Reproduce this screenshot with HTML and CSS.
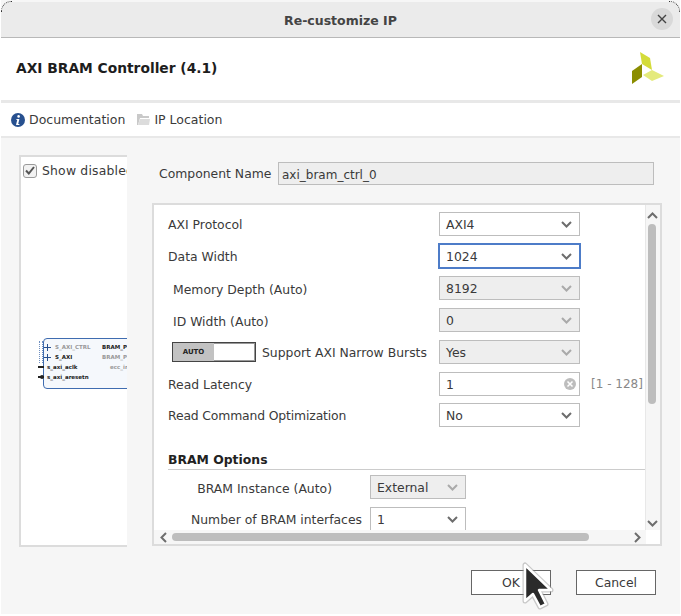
FILE: index.html
```html
<!DOCTYPE html>
<html lang="en">

<head>
    <meta charset="UTF-8">
    <title>Re-customize IP</title>
    <link rel="stylesheet" href="styles.css">
</head>

<body>
    <div id="dialog">
        <div class="titlebar">
            <span class="title">Re-customize IP</span>
            <span class="close">
                <svg width="10" height="10" viewBox="0 0 10 10"><path d="M1 1L9 9M9 1L1 9" stroke="#444" stroke-width="1.4" fill="none"/></svg>
            </span>
        </div>

        <div class="header">
            <h1>AXI BRAM Controller (4.1)</h1>
            <svg class="logo" width="33" height="33" viewBox="0 0 33 33">
                <polygon points="9,0 19,6 21,18 11,12" fill="#d4dc3a"/>
                <polygon points="1,19 11,12 11,25 1,32" fill="#8b8d00"/>
                <polygon points="12,23 21,18 33,24 21,29" fill="#e4ea7c"/>
            </svg>
        </div>

        <div class="toolbar">
            <span class="tool">
                <svg width="14" height="14" viewBox="0 0 14 14"><circle cx="7" cy="7" r="7" fill="#27508f"/><circle cx="7.6" cy="3.4" r="1.3" fill="#fff"/><path d="M5.4 6h3l-1.2 5h1.2v1H5l1.2-5H5.400z" fill="#fff"/></svg>
                Documentation
            </span>
            <span class="tool">
                <svg width="13" height="13" viewBox="0 0 13 13"><path d="M0 1h5l1 2h6v2H3L1 12H0z" fill="#c9c9c9"/><path d="M3 6h10l-1 6H1z" fill="#dcdcdc"/></svg>
                IP Location
            </span>
        </div>

        <div class="main">
            <div class="preview">
                <label class="show-disabled">
                    <span class="check">
                        <svg width="10" height="9" viewBox="0 0 10 9"><path d="M1 4.500L3.800 7.500L9 1" stroke="#555" stroke-width="2" fill="none"/></svg>
                    </span>
                    Show disabled ports
                </label>
                <div class="block">
                    <div class="dots"></div>
                    <div class="port"><i class="plus"></i><span>S_AXI_CTRL</span></div>
                    <div class="port dark"><i class="plus"></i><span>S_AXI</span></div>
                    <div class="port dark pin"><span>s_axi_aclk</span></div>
                    <div class="port dark pin reset"><span>s_axi_aresetn</span></div>
                    <div class="out dark">BRAM_PORTA</div>
                    <div class="out out2">BRAM_PORTB</div>
                    <div class="out out3">ecc_interrupt</div>
                </div>
            </div>

            <div class="form">
                <div class="name-row">
                    <span class="name-label">Component Name</span>
                    <div class="name-box">axi_bram_ctrl_0</div>
                </div>

                <div class="scroll-panel">
                    <div class="scroll-view">
                        <div class="params">
                            <div class="row">
                                <span class="label">AXI Protocol</span>
                                <div class="select"><span>AXI4</span><svg class="chev" viewBox="0 0 11 7"><path d="M1 1L5.500 5.500L10 1" /></svg></div>
                            </div>
                            <div class="row">
                                <span class="label">Data Width</span>
                                <div class="select focus"><span>1024</span><svg class="chev" viewBox="0 0 11 7"><path d="M1 1L5.500 5.500L10 1" /></svg></div>
                            </div>
                            <div class="row">
                                <span class="label sub">Memory Depth (Auto)</span>
                                <div class="select off"><span>8192</span><svg class="chev" viewBox="0 0 11 7"><path d="M1 1L5.500 5.500L10 1" /></svg></div>
                            </div>
                            <div class="row">
                                <span class="label sub">ID Width (Auto)</span>
                                <div class="select off"><span>0</span><svg class="chev" viewBox="0 0 11 7"><path d="M1 1L5.500 5.500L10 1" /></svg></div>
                            </div>
                            <div class="row">
                                <span class="label toggle-label"><span class="toggle"><i>AUTO</i></span>Support AXI Narrow Bursts</span>
                                <div class="select off"><span>Yes</span><svg class="chev" viewBox="0 0 11 7"><path d="M1 1L5.500 5.500L10 1" /></svg></div>
                            </div>
                            <div class="row latency">
                                <span class="label">Read Latency</span>
                                <div class="select input"><span>1</span>
                                    <svg class="clear" width="12" height="12" viewBox="0 0 12 12"><circle cx="6" cy="6" r="6" fill="#bdbdbd"/><path d="M3.500 3.500L8.500 8.500M8.500 3.500L3.500 8.500" stroke="#fff" stroke-width="1.500"/></svg>
                                </div>
                                <span class="range">[1 - 128]</span>
                            </div>
                            <div class="row">
                                <span class="label tight">Read Command Optimization</span>
                                <div class="select"><span>No</span><svg class="chev" viewBox="0 0 11 7"><path d="M1 1L5.500 5.500L10 1" /></svg></div>
                            </div>

                            <div class="section">BRAM Options</div>
                            <div class="row2">
                                <span class="label2 inset">BRAM Instance (Auto)</span>
                                <div class="select small off"><span>External</span><svg class="chev" viewBox="0 0 11 7"><path d="M1 1L5.500 5.500L10 1" /></svg></div>
                            </div>
                            <div class="row2">
                                <span class="label2">Number of BRAM interfaces</span>
                                <div class="select small"><span>1</span><svg class="chev" viewBox="0 0 11 7"><path d="M1 1L5.500 5.500L10 1" /></svg></div>
                            </div>
                        </div>
                        <div class="vbar">
                            <svg class="arrow" viewBox="0 0 11 7"><path d="M1 6L5.500 1.500L10 6" /></svg>
                            <div class="vtrack"><div class="vthumb"></div></div>
                            <svg class="arrow" viewBox="0 0 11 7"><path d="M1 1L5.500 5.500L10 1" /></svg>
                        </div>
                    </div>
                    <div class="hbar">
                        <svg class="arrow-h" viewBox="0 0 7 11"><path d="M6 1L1.500 5.500L6 10" /></svg>
                        <div class="htrack"><div class="hthumb"></div></div>
                        <svg class="arrow-h" viewBox="0 0 7 11"><path d="M1 1L5.500 5.500L1 10" /></svg>
                        <div class="corner"></div>
                    </div>
                </div>
            </div>
        </div>

        <div class="buttons">
            <button class="btn">OK</button>
            <button class="btn">Cancel</button>
        </div>

        <svg class="cursor" width="36" height="54" viewBox="0 0 36 54">
            <path d="M4 6L4 42L12 35L19 48L25 45L18 31L30 31Z" fill="none" stroke="#999" stroke-opacity="0.5" stroke-width="5" stroke-linejoin="round"/>
            <path d="M4 6L4 42L12 35L19 48L25 45L18 31L30 31Z" fill="#2b2b2b" stroke="#fff" stroke-width="2.500" stroke-linejoin="round"/>
        </svg>
    </div>
</body>

</html>
```

FILE: styles.css
```css
* {
    margin: 0;
    padding: 0;
    box-sizing: border-box;
}

body {
    width: 681px;
    height: 616px;
    overflow: hidden;
    background: #fff;
    font-family: "DejaVu Sans", sans-serif;
    font-size: 12.4px;
    color: #3a3a3a;
}

#dialog {
    position: relative;
    width: 681px;
    height: 616px;
    padding-top: 2px;
    border: solid #fff;
    border-width: 0 1px 2px 1px;
    background: #f6f6f6;
    display: flex;
    flex-direction: column;
}

.titlebar {
    height: 36px;
    flex: none;
    background: #ebebeb;
    border-bottom: 1px solid #b8b8b8;
    border-radius: 10px 10px 0 0;
    padding-top: 1px;
    display: flex;
    align-items: center;
    justify-content: center;
    position: relative;
}

/* the dark rim of the window's rounded corners */
.titlebar::before,
.titlebar::after {
    content: "";
    position: absolute;
    top: -1px;
    width: 10px;
    height: 10px;
    border-top: 1px dotted #333;
}

.titlebar::before {
    left: 0;
    border-left: 1px dotted #333;
    border-top-left-radius: 10px;
}

.titlebar::after {
    right: 0;
    border-right: 1px dotted #333;
    border-top-right-radius: 10px;
}

.title {
    font-weight: bold;
    font-size: 12.5px;
    color: #444;
}

.close {
    position: absolute;
    right: 7px;
    top: 6px;
    width: 22px;
    height: 22px;
    border-radius: 50%;
    background: #d9d9d9;
    display: flex;
    align-items: center;
    justify-content: center;
}

.header {
    height: 65px;
    flex: none;
    background: #fff;
    border-bottom: 3px solid #e8e8e8;
    padding: 0 16px 2px 15px;
    display: flex;
    align-items: center;
    justify-content: space-between;
}

.header h1 {
    font-size: 13.8px;
    color: #1d1d1d;
}

.toolbar {
    height: 35px;
    flex: none;
    background: #fff;
    border-bottom: 2px solid #e8e8e8;
    padding: 0 0 0 10px;
    display: flex;
    align-items: center;
    gap: 12px;
    font-size: 12.5px;
}

.tool {
    display: flex;
    align-items: center;
    gap: 4px;
}

.main {
    height: 416px;
    flex: none;
    padding: 17px 0 0 18px;
    display: flex;
}

.preview {
    position: relative;
    width: 108px;
    height: 392px;
    flex: none;
    background: #fff;
    border: 2px solid #dcdcdc;
    border-width: 2px 0 2px 2px;
    overflow: hidden;
}

.show-disabled {
    display: flex;
    align-items: center;
    gap: 5px;
    white-space: nowrap;
    padding: 6px 0 0 2px;
    letter-spacing: 0.2px;
}

.check {
    width: 14px;
    height: 14px;
    flex: none;
    border: 1px solid #9a9a9a;
    border-radius: 3px;
    background: #f2f2f2;
    display: flex;
    align-items: center;
    justify-content: center;
}

.block {
    position: absolute;
    left: 22px;
    top: 181px;
    width: 120px;
    height: 51px;
    border: 1px solid #3f6cb0;
    border-radius: 4px;
    background: #f5f8fc;
    padding-top: 3px;
    font-size: 5.500px;
    color: #999;
    font-weight: bold;
}

.dots {
    position: absolute;
    left: -5px;
    top: 2px;
    width: 4px;
    height: 22px;
    border-left: 1px dotted #6f8fc0;
    border-right: 1px dotted #6f8fc0;
}

.port {
    height: 10px;
    display: flex;
    align-items: center;
    gap: 4px;
    padding-left: 0;
    white-space: nowrap;
}

.plus {
    width: 7px;
    height: 7px;
    flex: none;
    background:
        linear-gradient(#27508f, #27508f) center / 100% 1px no-repeat,
        linear-gradient(#27508f, #27508f) center / 1px 100% no-repeat;
}

.pin {
    padding-left: 3px;
}

.pin::before {
    content: "";
    position: absolute;
    left: -6px;
    width: 6px;
    height: 2px;
    background: #222;
}

.reset::after {
    content: "";
    position: absolute;
    left: -4px;
    width: 4px;
    height: 4px;
    border-radius: 50%;
    background: #222;
}

.dark {
    color: #222;
}

.out {
    position: absolute;
    left: 58px;
    top: 3px;
    height: 10px;
    line-height: 10px;
    white-space: nowrap;
}

.out2 {
    top: 13px;
}

.out3 {
    left: 66px;
    top: 23px;
}

.form {
    width: 535px;
    padding-left: 25px;
    flex: none;
}

.name-row {
    display: flex;
    align-items: center;
    gap: 7px;
    padding: 7px 0 0 7px;
    height: 30px;
}

.name-label {
    width: 112px;
    flex: none;
    white-space: nowrap;
}

.name-box {
    width: 376px;
    height: 23px;
    flex: none;
    line-height: 22px;
    padding: 1px 0 0 3px;
    font-size: 12px;
    background: #eee;
    border: 1px solid #bdbdbd;
}

.scroll-panel {
    margin-top: 18px;
    width: 510px;
    height: 343px;
    background: #eee;
    border: 2px solid #dcdcdc;
}

.scroll-view {
    height: 325px;
    display: flex;
    background: #fff;
}

.params {
    width: 493px;
    height: 325px;
    overflow: hidden;
    padding: 7px 0 0 14px;
}

.row {
    height: 24px;
    margin-bottom: 8px;
    display: flex;
    align-items: center;
    position: relative;
}

.latency {
    margin-bottom: 7px;
}

.label {
    width: 271px;
    flex: none;
}

.sub {
    padding: 2px 0 0 5px;
}

.tight {
    letter-spacing: -0.15px;
}

.toggle-label {
    display: flex;
    align-items: center;
    gap: 6px;
    padding-left: 4px;
    white-space: nowrap;
}

.toggle {
    width: 84px;
    height: 20px;
    flex: none;
    background: #fff;
    border: 1px solid #444;
    box-shadow: inset 0 0 0 1px #999;
}

.toggle i {
    display: block;
    width: 41px;
    height: 18px;
    background: #c2c2c2;
    font-style: normal;
    font-weight: bold;
    font-size: 7px;
    line-height: 18px;
    text-align: center;
    color: #222;
}

.select {
    width: 141px;
    height: 24px;
    flex: none;
    background: #fff;
    border: 1px solid #bdbdbd;
    padding: 0 7px 0 6px;
    display: flex;
    align-items: center;
    justify-content: space-between;
}

.focus {
    border-color: #4d7cc8;
    box-shadow: 0 0 0 1px #4d7cc8;
}

.off {
    background: #eee;
}

.chev {
    width: 11px;
    height: 7px;
    flex: none;
}

.chev path,
.arrow path,
.arrow-h path {
    fill: none;
    stroke: #6d6d6d;
    stroke-width: 2;
}

.off .chev path {
    stroke: #aaa;
}

.input {
    padding-right: 3px;
}

.range {
    position: absolute;
    left: 423px;
    white-space: nowrap;
    color: #888;
    font-size: 12px;
}

.section {
    margin-top: 24px;
    padding-top: 1px;
    height: 19px;
    font-weight: bold;
    color: #222;
    border-bottom: 1px solid #ccc;
}

.row2 {
    height: 24px;
    margin-top: 5px;
    display: flex;
    align-items: center;
    justify-content: flex-end;
    gap: 8px;
    width: 298px;
    white-space: nowrap;
}

.row2 + .row2 {
    margin-top: 8px;
}

.label2 {
    flex: 1;
    text-align: right;
}

.inset {
    padding: 2px 30px 0 0;
}

.small {
    width: 96px;
}

.vbar {
    width: 15px;
    flex: none;
    background: #f6f6f6;
    border-left: 1px solid #e8e8e8;
    display: flex;
    flex-direction: column;
    align-items: center;
    padding: 7px 2px 3px 0;
}

.arrow {
    width: 11px;
    height: 7px;
    flex: none;
}

.vtrack {
    flex: 1;
    width: 8px;
    padding-top: 5px;
}

.vthumb {
    width: 8px;
    height: 180px;
    border-radius: 4px;
    background: #bdbdbd;
}

.hbar {
    height: 14px;
    display: flex;
    align-items: center;
    background: #f6f6f6;
    padding-left: 6px;
}

.arrow-h {
    width: 7px;
    height: 11px;
    flex: none;
}

.htrack {
    flex: 1;
    padding-left: 5px;
}

.hthumb {
    width: 417px;
    height: 8px;
    border-radius: 4px;
    background: #bdbdbd;
}

.corner {
    width: 14px;
    height: 14px;
    margin-left: 5px;
    background: #fff;
}

.buttons {
    flex: 1;
    display: flex;
    justify-content: flex-end;
    align-items: flex-start;
    gap: 25px;
    padding: 16px 24px 0 0;
}

.btn {
    width: 80px;
    height: 25px;
    background: #fff;
    border: 1px solid #666;
    font-family: inherit;
    font-size: 12.4px;
    color: #3a3a3a;
}

.cursor {
    position: absolute;
    left: 520px;
    top: 559px;
}
```
